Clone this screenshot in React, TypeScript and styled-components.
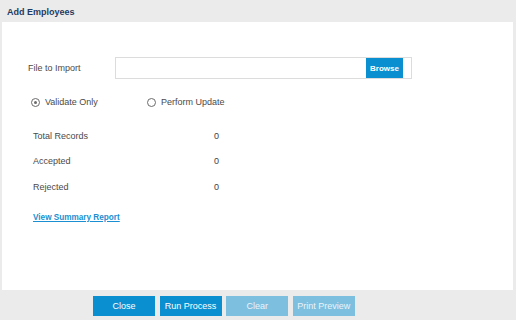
import styled, { createGlobalStyle } from 'styled-components';
import { Fragment } from 'react';

const GlobalStyle = createGlobalStyle`
  html, body {
    margin: 0;
    padding: 0;
    width: 516px;
    height: 320px;
    overflow: hidden;
    background: #ebebeb;
    font-family: "Liberation Sans", Arial, sans-serif;
  }
`;

const Page = styled.div`
  display: flex;
  flex-direction: column;
  width: 516px;
  height: 320px;
  background: #ebebeb;
`;

const Header = styled.div`
  height: 22px;
  display: flex;
  align-items: center;
  padding: 1px 0 0 7px;
  box-sizing: border-box;
  font-size: 9px;
  font-weight: bold;
  color: #1f3b63;
`;

const Panel = styled.div`
  height: 268px;
  margin: 0 3px 0 2px;
  background: #fff;
  padding: 35px 0 0 26px;
  box-sizing: border-box;
  color: #4a4a4a;
  font-size: 9px;
`;

const FileRow = styled.div`
  display: flex;
  align-items: center;
  height: 22px;
`;

const Label = styled.div<{ $width: number }>`
  width: ${(p) => p.$width}px;
  flex-shrink: 0;
`;

const FileBox = styled.div`
  width: 297px;
  height: 22px;
  box-sizing: border-box;
  border: 1px solid #dcdcdc;
  display: flex;
  justify-content: flex-end;
  align-items: flex-end;
  padding-right: 8px;
`;

const BrowseButton = styled.button`
  width: 37px;
  height: 20px;
  border: none;
  background: #0a8fd0;
  color: #fff;
  font-family: inherit;
  font-size: 8px;
  font-weight: bold;
  padding: 0;
`;

const RadioRow = styled.div`
  display: flex;
  align-items: center;
  margin-top: 15px;
  padding-left: 3px;
  height: 16px;
`;

const RadioOption = styled.label<{ $width?: number }>`
  display: flex;
  align-items: center;
  gap: 5px;
  width: ${(p) => (p.$width ? `${p.$width}px` : 'auto')};
`;

const RadioCircle = styled.span<{ $checked?: boolean }>`
  width: 9px;
  height: 9px;
  box-sizing: border-box;
  border: 1px solid #6b6b6b;
  border-radius: 50%;
  display: flex;
  align-items: center;
  justify-content: center;

  &::after {
    content: '';
    width: 3px;
    height: 3px;
    border-radius: 50%;
    background: ${(p) => (p.$checked ? '#6b6b6b' : 'transparent')};
  }
`;

const Stats = styled.div`
  margin-top: 13px;
  padding-left: 5px;
  display: grid;
  grid-template-columns: 181px auto;
  grid-auto-rows: 25.5px;
  align-items: center;
`;

const Value = styled.div`
  color: #404040;
`;

const ReportLink = styled.a`
  display: inline-block;
  margin: 13px 0 0 5px;
  color: #1a8fd1;
  font-weight: bold;
  font-size: 8.2px;
  text-decoration: underline;
  cursor: pointer;
`;

const Footer = styled.div`
  flex: 1;
  display: flex;
  gap: 4.6px;
  padding: 6px 0 0 93px;
`;

const ActionButton = styled.button<{ $disabled?: boolean }>`
  width: 62px;
  height: 20px;
  border: none;
  padding: 0;
  background: ${(p) => (p.$disabled ? '#7dbfdf' : '#0a8fd0')};
  color: ${(p) => (p.$disabled ? '#eaf4fa' : '#fff')};
  font-family: inherit;
  font-size: 9px;
`;

const stats = [
  { label: 'Total Records', value: 0 },
  { label: 'Accepted', value: 0 },
  { label: 'Rejected', value: 0 },
];

export default function App() {
  return (
    <>
      <GlobalStyle />
      <Page>
        <Header>Add Employees</Header>
        <Panel>
          <FileRow>
            <Label $width={87}>File to Import</Label>
            <FileBox>
              <BrowseButton>Browse</BrowseButton>
            </FileBox>
          </FileRow>
          <RadioRow>
            <RadioOption $width={116}>
              <RadioCircle $checked />
              Validate Only
            </RadioOption>
            <RadioOption>
              <RadioCircle />
              Perform Update
            </RadioOption>
          </RadioRow>
          <Stats>
            {stats.map((s) => (
              <Fragment key={s.label}>
                <div>{s.label}</div>
                <Value>{s.value}</Value>
              </Fragment>
            ))}
          </Stats>
          <ReportLink>View Summary Report</ReportLink>
        </Panel>
        <Footer>
          <ActionButton>Close</ActionButton>
          <ActionButton>Run Process</ActionButton>
          <ActionButton $disabled>Clear</ActionButton>
          <ActionButton $disabled>Print Preview</ActionButton>
        </Footer>
      </Page>
    </>
  );
}
